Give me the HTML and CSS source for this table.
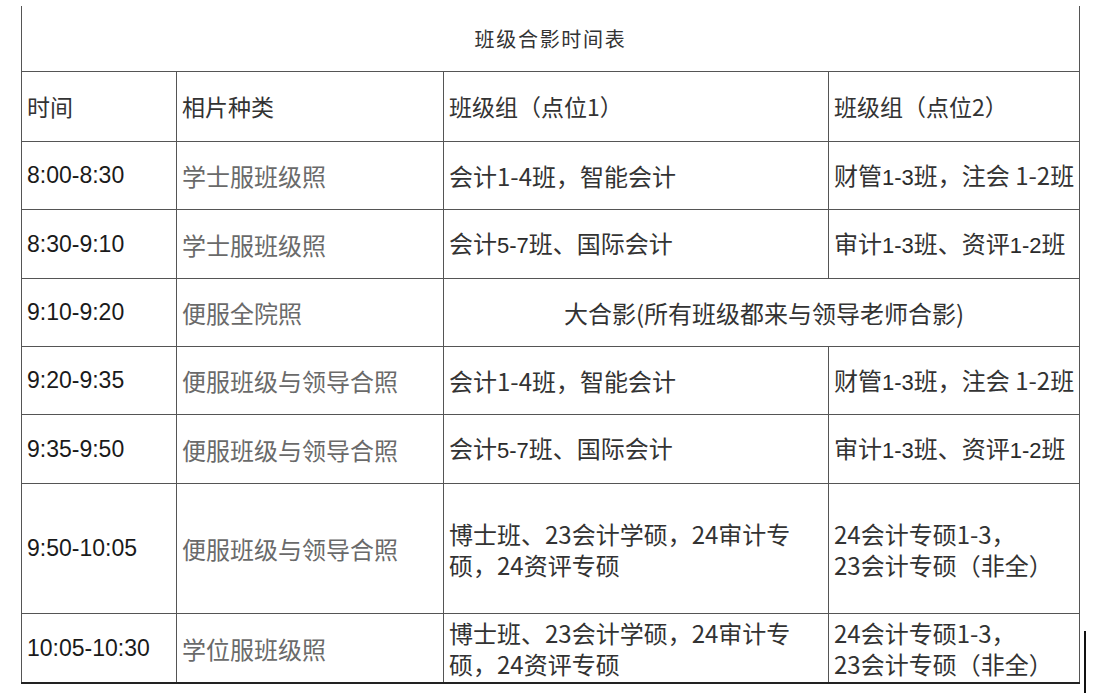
FILE: index.html
```html
<!DOCTYPE html>
<html lang="zh-CN">
<head>
<meta charset="utf-8">
<title>班级合影时间表</title>
<link rel="stylesheet" href="styles.css">
</head>
<body>
<div class="page">
  <table class="schedule">
    <colgroup>
      <col class="c-time">
      <col class="c-kind">
      <col class="c-g1">
      <col class="c-g2">
    </colgroup>
    <tr class="r-title">
      <td colspan="4" class="title">班级合影时间表</td>
    </tr>
    <tr class="r-head">
      <td class="head">时间</td>
      <td class="head">相片种类</td>
      <td class="head">班级组（点位1）</td>
      <td class="head">班级组（点位2）</td>
    </tr>
    <tr class="r-std">
      <td class="time">8:00-8:30</td>
      <td class="kind">学士服班级照</td>
      <td class="grp">会计1-4班，智能会计</td>
      <td class="grp">财管<span class="num">1-3</span>班，注会 1-2班</td>
    </tr>
    <tr class="r-std r-plus">
      <td class="time">8:30-9:10</td>
      <td class="kind">学士服班级照</td>
      <td class="grp">会计<span class="num">5-7</span>班、国际会计</td>
      <td class="grp">审计<span class="num">1-3</span>班、资评<span class="num">1-2</span>班</td>
    </tr>
    <tr class="r-std">
      <td class="time">9:10-9:20</td>
      <td class="kind">便服全院照</td>
      <td class="grp center" colspan="2">大合影(所有班级都来与领导老师合影)</td>
    </tr>
    <tr class="r-std">
      <td class="time">9:20-9:35</td>
      <td class="kind">便服班级与领导合照</td>
      <td class="grp">会计1-4班，智能会计</td>
      <td class="grp">财管<span class="num">1-3</span>班，注会 1-2班</td>
    </tr>
    <tr class="r-std r-plus">
      <td class="time">9:35-9:50</td>
      <td class="kind">便服班级与领导合照</td>
      <td class="grp">会计<span class="num">5-7</span>班、国际会计</td>
      <td class="grp">审计<span class="num">1-3</span>班、资评<span class="num">1-2</span>班</td>
    </tr>
    <tr class="r-tall">
      <td class="time">9:50-10:05</td>
      <td class="kind">便服班级与领导合照</td>
      <td class="grp multi">博士班、23会计学硕，24审计专<br>硕，24资评专硕</td>
      <td class="grp multi">24会计专硕1-3，<br>23会计专硕（非全）</td>
    </tr>
    <tr class="r-last">
      <td class="time">10:05-10:30</td>
      <td class="kind">学位服班级照</td>
      <td class="grp multi">博士班、23会计学硕，24审计专<br>硕，24资评专硕</td>
      <td class="grp multi">24会计专硕1-3，<br>23会计专硕（非全）</td>
    </tr>
  </table>
  <div class="edge-mark"></div>
</div>
</body>
</html>
```

FILE: styles.css
```css
html, body {
  margin: 0;
  padding: 0;
  background: #ffffff;
}

.page {
  position: relative;
  width: 1100px;
  height: 693px;
  overflow: hidden;
  padding: 6px 0 0 21px;
  box-sizing: border-box;
}

.schedule {
  border-collapse: collapse;
  table-layout: fixed;
  width: 1058px;
  font-family: "Noto Sans CJK SC", "Liberation Sans", sans-serif;
  font-size: 24px;
  color: #333333;
}

.c-time { width: 155px; }
.c-kind { width: 267px; }
.c-g1 { width: 385px; }
.c-g2 { width: 251px; }

.schedule td {
  border: 1px solid #555555;
  padding: 0 0 0 5px;
  vertical-align: middle;
  text-align: left;
  line-height: 31px;
  white-space: nowrap;
  overflow: visible;
}

.r-title td {
  border-top: none;
  height: 65px;
}
.r-head td { height: 69px; }
.r-std td { height: 67px; }
.r-std.r-plus td { height: 68px; }
.r-tall td { height: 129px; }
.r-last td {
  height: 68px;
  border-bottom: 2px solid #222222;
}

.title {
  text-align: center !important;
  padding: 0 !important;
  font-size: 20px;
  letter-spacing: 1.7px;
  color: #333333;
}

.head {
  font-size: 23px;
  color: #333333;
}

.time {
  font-family: "Liberation Sans", Arial, sans-serif;
  font-size: 23px;
  color: #1a1a1a;
}

.kind {
  color: #6a6a6a;
}

.grp {
  color: #333333;
}

.grp.center {
  text-align: center;
}

.num {
  font-family: "Liberation Sans", Arial, sans-serif;
  font-size: 22px;
  color: #2a2a2a;
}

.edge-mark {
  position: absolute;
  left: 1084px;
  top: 631px;
  width: 2px;
  height: 62px;
  background: #111111;
}
```
